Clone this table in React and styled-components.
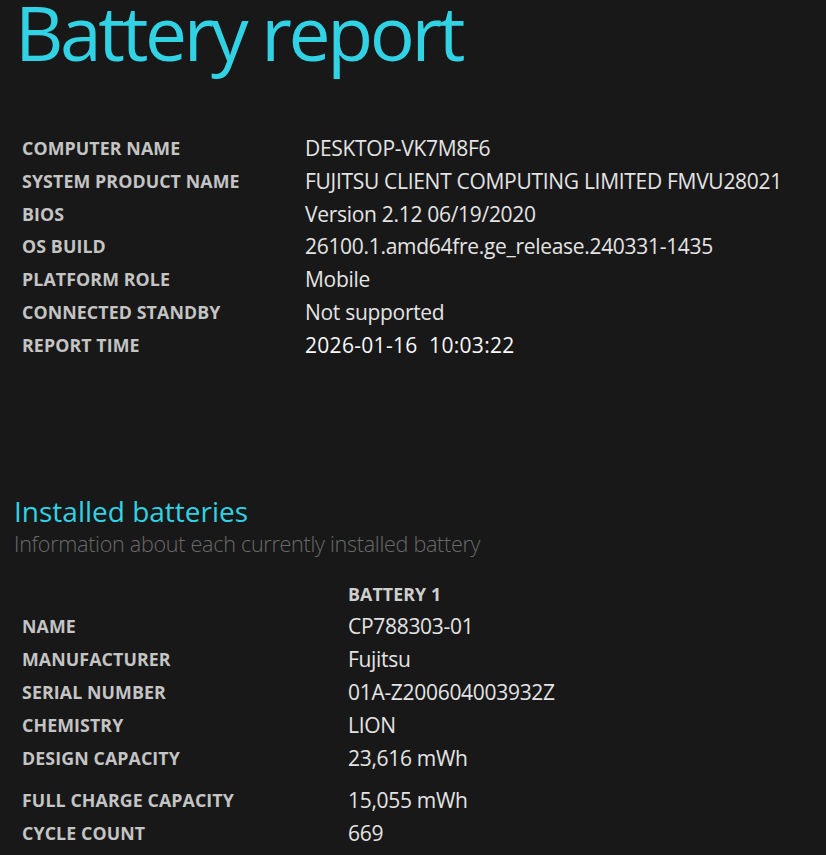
import React from "react";
import styled, { createGlobalStyle } from "styled-components";

const Global = createGlobalStyle`
  html, body { margin: 0; padding: 0; background: #181818; }
  body { font-family: "Open Sans", "Noto Sans", sans-serif; color: #e6e6e6; }
`;

const Page = styled.div`
  width: 826px;
  height: 855px;
  overflow: hidden;
  padding: 0 0 0 14px;
  box-sizing: border-box;
  background: #181818;
`;

const Title = styled.h1`
  margin: 0 0 0 1px;
  font-size: 75px;
  font-weight: 400;
  line-height: 64px;
  color: #30d2e4;
  letter-spacing: -3.4px;
  white-space: nowrap;
`;

const Table = styled.div`
  display: grid;
  grid-template-columns: ${(p) => p.$labelWidth}px auto;
  margin: ${(p) => p.$margin};
  padding-left: 8px;
`;

const Label = styled.div`
  font-size: 17.8px;
  font-weight: 700;
  color: #c4c4c4;
  text-transform: uppercase;
  line-height: 32.8px;
  letter-spacing: 0.1px;
  margin-top: ${(p) => p.$gap || 0}px;
  white-space: nowrap;
`;

const Value = styled.div`
  font-size: 21px;
  font-weight: ${(p) => (p.$strong ? 500 : 400)};
  color: ${(p) => (p.$strong ? "#f8f8f8" : "#e4e4e4")};
  line-height: 32.8px;
  letter-spacing: ${(p) => (p.$strong ? "0.3px" : "-0.3px")};
  margin-top: ${(p) => p.$gap || 0}px;
  white-space: nowrap;
`;

const Section = styled.h2`
  margin: ${(p) => p.$top}px 0 0 0;
  font-size: 28px;
  font-weight: 400;
  line-height: 34px;
  color: #30d2e4;
`;

const Subtitle = styled.div`
  margin-top: 3px;
  font-size: 21.6px;
  font-weight: 300;
  color: #6a6a6a;
  line-height: 26px;
  letter-spacing: -0.3px;
`;

const ColHead = styled(Label)`
  color: #cfcfcf;
`;

const info = [
  ["Computer name", "DESKTOP-VK7M8F6"],
  ["System product name", "FUJITSU CLIENT COMPUTING LIMITED FMVU28021"],
  ["BIOS", "Version 2.12 06/19/2020"],
  ["OS build", "26100.1.amd64fre.ge_release.240331-1435"],
  ["Platform role", "Mobile"],
  ["Connected standby", "Not supported"],
];

const battery = [
  ["Name", "CP788303-01"],
  ["Manufacturer", "Fujitsu"],
  ["Serial number", "01A-Z200604003932Z"],
  ["Chemistry", "LION"],
  ["Design capacity", "23,616 mWh"],
  ["Full charge capacity", "15,055 mWh", 10],
  ["Cycle count", "669"],
];

export default function App() {
  return (
    <Page>
      <Global />
      <Title>Battery report</Title>
      <Table $labelWidth={283} $margin="68px 0 0 0">
        {info.map(([k, v]) => (
          <React.Fragment key={k}>
            <Label>{k}</Label>
            <Value>{v}</Value>
          </React.Fragment>
        ))}
        <Label>Report time</Label>
        <Value $strong>2026-01-16&nbsp;&nbsp;10:03:22</Value>
      </Table>
      <Section $top={132}>Installed batteries</Section>
      <Subtitle>Information about each currently installed battery</Subtitle>
      <Table $labelWidth={326} $margin="21px 0 0 0">
        <span />
        <ColHead>Battery 1</ColHead>
        {battery.map(([k, v, g]) => (
          <React.Fragment key={k}>
            <Label $gap={g}>{k}</Label>
            <Value $gap={g}>{v}</Value>
          </React.Fragment>
        ))}
      </Table>
    </Page>
  );
}
